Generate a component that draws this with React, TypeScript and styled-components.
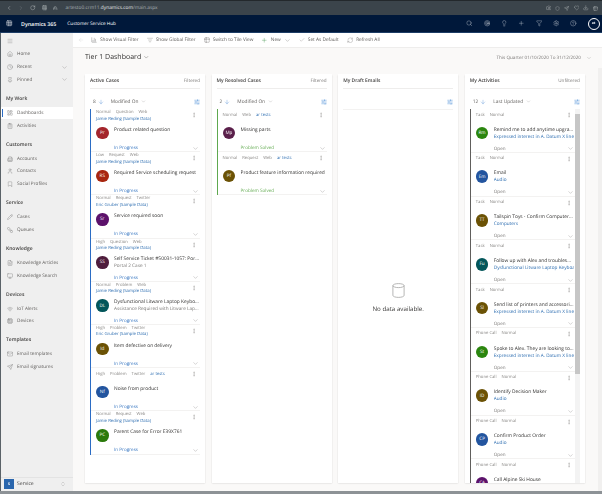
import React from "react";
import styled, { createGlobalStyle } from "styled-components";
import {
  ArrowDown, ArrowLeft, BarChart3, Bookmark, Building2, Camera, Check, ChevronDown, ChevronLeft, ChevronRight,
  ChevronsUpDown, ClipboardList, Clock, Cpu, Download, FileText, Filter, Grid3x3, Heart,
  HelpCircle, Home, Lightbulb, ListFilter, Lock, Mail, Menu, Monitor, MoreVertical, Pencil, Pin, Plus, RefreshCw,
  RotateCw, Search, Send, Settings, Shield, SlidersHorizontal, SquareStack, Table2, Target, User, Wifi, LayoutDashboard,
} from "lucide-react";

const GlobalStyle = createGlobalStyle`
  html, body { margin: 0; padding: 0; height: 494px; overflow: hidden; }
  body {
    font-family: "Open Sans", "Noto Sans", sans-serif;
    background: #faf9f8;
    color: #3b3a39;
    text-rendering: geometricPrecision;
  }
  * { box-sizing: border-box; }
`;

const Page = styled.div`
  width: 602px;
  height: 494px;
  display: flex;
  flex-direction: column;
  overflow: hidden;
  filter: blur(0.3px);
`;

const BrowserBar = styled.div`
  height: 15px;
  flex: none;
  background: #3b444b;
  border-top: 1px solid #23282c;
  display: flex;
  align-items: center;
  padding: 0 4px 0 6px;
  color: #d5d8da;
  gap: 6px;
`;

const BrowserRight = styled.div`
  display: flex;
  align-items: center;
  gap: 4.2px;
`;

const Url = styled.span`
  font-size: 4.8px;
  color: #a9b0b5;
  margin-left: 2px;
  b { color: #e6e8ea; font-weight: 400; }
`;

const Spacer = styled.div`
  flex: 1;
`;

const TopNav = styled.div`
  height: 17px;
  flex: none;
  background: #00183a;
  color: #fff;
  display: flex;
  align-items: center;
  padding: 0 2.5px 0 6px;
`;

const Brand = styled.span`
  font-size: 5.3px;
  font-weight: 600;
  margin-left: 8.5px;
  margin-right: 11px;
`;

const Hub = styled.span`
  font-size: 4.7px;
`;

const NavIcons = styled.div`
  display: flex;
  align-items: center;
  gap: 10.8px;
  color: #e8ebef;
`;

const UserBadge = styled.div`
  width: 12px;
  height: 12px;
  border: 0.6px solid #fff;
  border-radius: 50%;
  font-size: 3.6px;
  font-weight: 700;
  display: flex;
  align-items: center;
  justify-content: center;
`;

const Body = styled.div`
  flex: 1;
  min-height: 0;
  display: flex;
  border-top: 1px solid #1d3d66;
`;

const Sidebar = styled.aside`
  width: 73px;
  flex: none;
  background: #efefef;
  border-left: 1px solid #5a6268;
  display: flex;
  flex-direction: column;
`;

const SideScroll = styled.div`
  flex: 1;
`;

const NavRow = styled.div<{ $active?: boolean }>`
  height: 12.75px;
  display: flex;
  align-items: center;
  padding-left: 5.5px;
  gap: 4.5px;
  position: relative;
  font-size: 4.7px;
  color: #605e5c;
  background: ${(p) => (p.$active ? "#fff" : "transparent")};
  svg:first-child { color: #6b6a69; flex: none; }
  &::before {
    content: "";
    display: ${(p) => (p.$active ? "block" : "none")};
    position: absolute;
    left: 1px;
    top: 2.5px;
    bottom: 2.5px;
    width: 1.2px;
    background: #2b6cc4;
  }
`;

const HamburgerRow = styled(NavRow)`
  height: 15px;
`;

const RowChevron = styled.span`
  margin-left: auto;
  margin-right: 5px;
  display: flex;
  color: #777;
`;

const SectionTitle = styled.div`
  font-size: 5px;
  font-weight: 600;
  color: #403f3e;
  padding: 5px 0 0 5px;
  height: 20.25px;
  display: flex;
  align-items: center;
`;

const AreaSwitch = styled.div`
  height: 14.5px;
  flex: none;
  border-top: 1px solid #e3e3e3;
  display: flex;
  align-items: center;
  padding: 0 2px 0 2.7px;
  font-size: 5px;
  color: #403f3e;
  gap: 3px;
`;

const AreaSquare = styled.div`
  width: 10.4px;
  height: 10.4px;
  background: #2a66ad;
  color: #fff;
  font-size: 3.6px;
  font-weight: 700;
  display: flex;
  align-items: center;
  justify-content: center;
`;

const Main = styled.main`
  flex: 1;
  min-width: 0;
  display: flex;
  flex-direction: column;
  position: relative;
`;

const CommandBar = styled.div`
  height: 15px;
  flex: none;
  background: #fff;
  border-bottom: 1px solid #eeedec;
  display: flex;
  align-items: center;
  padding-left: 5px;
  font-size: 4.75px;
  color: #605e5c;
`;

const Cmd = styled.div<{ $gap?: number; $lead?: number }>`
  display: flex;
  align-items: center;
  gap: 3px;
  margin-left: ${(p) => p.$lead ?? 0}px;
  margin-right: ${(p) => p.$gap ?? 8}px;
`;

const TitleRow = styled.div`
  height: 26px;
  flex: none;
  display: flex;
  align-items: center;
  justify-content: space-between;
  padding: 0 10px 7px 12px;
`;

const Title = styled.h1`
  margin: 0;
  font-size: 7px;
  font-weight: 400;
  color: #323130;
  display: flex;
  align-items: center;
  gap: 2px;
`;

const DateRange = styled.div`
  font-size: 4.6px;
  color: #7a7876;
  display: flex;
  align-items: center;
  gap: 5px;
`;

const Columns = styled.div`
  display: flex;
  gap: 6.6px;
  padding-left: 12px;
  height: 409px;
  flex: none;
`;

const Card = styled.section`
  width: 120px;
  height: 409px;
  flex: none;
  background: #fff;
  box-shadow: 0 0.5px 1.5px rgba(0, 0, 0, 0.16);
  display: flex;
  flex-direction: column;
  overflow: hidden;
`;

const CardHead = styled.div`
  height: 15px;
  margin: 0 5px;
  flex: none;
  border-bottom: 1px solid #eeedec;
  display: flex;
  align-items: center;
  justify-content: space-between;
  font-size: 4.6px;
  color: #7a7876;
  b { font-size: 4.9px; font-weight: 600; color: #403f3e; }
`;

const SortRow = styled.div`
  height: 20px;
  flex: none;
  display: flex;
  align-items: center;
  padding: 5px 5px 0 8px;
  font-size: 4.8px;
  color: #605e5c;
  gap: 2px;
`;

const SortField = styled.span`
  margin-left: 5px;
  display: flex;
  align-items: center;
  gap: 3px;
`;

const ListIcon = styled.span`
  margin-left: auto;
  display: flex;
  color: #2b78d0;
`;

const List = styled.div<{ $scroll?: boolean }>`
  flex: 1;
  min-height: 0;
  overflow: hidden;
  margin: 0 5px;
  padding-right: ${(p) => (p.$scroll ? 5 : 0)}px;
  position: relative;
`;

const Item = styled.article<{ $bar: string; $h: number }>`
  height: ${(p) => p.$h}px;
  padding: 0 0 0 5px;
  border-left: 1px solid ${(p) => p.$bar};
  position: relative;
  display: flex;
  flex-direction: column;
  &::after {
    content: "";
    position: absolute;
    left: 0;
    right: 0;
    bottom: 0;
    height: 1px;
    background: #f3f2f1;
  }
`;

const Meta = styled.div<{ $solo?: boolean }>`
  display: flex;
  gap: 5px;
  font-size: 4.2px;
  color: #8a8886;
  height: 6px;
  margin-top: ${(p) => (p.$solo ? 3 : 0.5)}px;
  align-items: center;
  a { color: #2b6cb0; }
`;

const Owner = styled.div`
  font-size: 4.3px;
  color: #2b6cb0;
  height: 6px;
  line-height: 6px;
  white-space: nowrap;
`;

const Dots = styled.span`
  position: absolute;
  right: 3px;
  top: 3px;
  display: flex;
  color: #8a8886;
`;

const ItemMain = styled.div`
  position: absolute;
  left: 5px;
  top: 17.6px;
  right: 1px;
  display: flex;
  gap: 5.4px;
`;

const Avatar = styled.div<{ $color: string }>`
  width: 12.6px;
  height: 12.6px;
  flex: none;
  border-radius: 50%;
  background: ${(p) => p.$color};
  color: #fff;
  font-size: 4.6px;
  display: flex;
  align-items: center;
  justify-content: center;
`;

const ItemText = styled.div`
  flex: 1;
  min-width: 0;
  font-size: 4.7px;
  line-height: 7px;
  color: #484644;
`;

const ItemTitle = styled.div`
  white-space: nowrap;
  overflow: hidden;
  text-overflow: ellipsis;
  font-size: 4.85px;
  color: #323130;
`;

const SubDark = styled.div`
  white-space: nowrap;
  overflow: hidden;
  text-overflow: ellipsis;
  color: #7a7876;
`;

const SubLink = styled.div`
  white-space: nowrap;
  overflow: hidden;
  color: #2b6cb0;
`;

const Status = styled.div<{ $color: string }>`
  position: absolute;
  left: 23px;
  bottom: 0.7px;
  right: 1px;
  height: 7px;
  display: flex;
  align-items: center;
  justify-content: space-between;
  font-size: 4.6px;
  color: ${(p) => p.$color};
  svg { color: #6f6e6d; }
`;

const Empty = styled.div`
  flex: 1;
  margin: 0 5px;
  border-top: 1px solid #f3f2f1;
  display: flex;
  flex-direction: column;
  align-items: center;
  padding-top: 173px;
  gap: 6px;
  font-size: 6.2px;
  color: #3b3a39;
  svg { color: #a5a4a3; }
`;

const ScrollTrack = styled.div`
  position: absolute;
  right: 0;
  top: 0;
  bottom: 0;
  width: 5px;
  background: #f3f3f3;
`;

const ScrollThumb = styled.div`
  position: absolute;
  right: 0;
  top: 5px;
  height: 260px;
  width: 5px;
  background: #c6c6c6;
`;

const PageScroll = styled.div`
  position: absolute;
  right: 0;
  top: 35px;
  bottom: 0;
  width: 4px;
  background: #f1f0ef;
`;

const BottomStrip = styled.div`
  height: 3px;
  flex: none;
  background: #8d9296;
`;

type NavItem = { label: string; icon: typeof Home; active?: boolean; chevron?: boolean };
type NavGroup = { title?: string; items: NavItem[] };

const nav: NavGroup[] = [
  { items: [{ label: "Home", icon: Home }, { label: "Recent", icon: Clock, chevron: true }, { label: "Pinned", icon: Pin, chevron: true }] },
  { title: "My Work", items: [{ label: "Dashboards", icon: LayoutDashboard, active: true }, { label: "Activities", icon: ClipboardList }] },
  { title: "Customers", items: [{ label: "Accounts", icon: Building2 }, { label: "Contacts", icon: User }, { label: "Social Profiles", icon: Bookmark }] },
  { title: "Service", items: [{ label: "Cases", icon: Pencil }, { label: "Queues", icon: SquareStack }] },
  { title: "Knowledge", items: [{ label: "Knowledge Articles", icon: FileText }, { label: "Knowledge Search", icon: Monitor }] },
  { title: "Devices", items: [{ label: "IoT Alerts", icon: Wifi }, { label: "Devices", icon: Cpu }] },
  { title: "Templates", items: [{ label: "Email templates", icon: Mail }, { label: "Email signatures", icon: Send }] },
];

type Entry = { meta: string[]; owner?: string; link?: string; initials: string; color: string; title: string; sub?: string };

const JR = "Jamie Reding (Sample Data)";
const EG = "Eric Gruber (Sample Data)";

const active: Entry[] = [
  { meta: ["Normal", "Question", "Web"], owner: JR, initials: "Pr", color: "#a4262c", title: "Product related question" },
  { meta: ["Low", "Request", "Web"], owner: JR, initials: "RS", color: "#a8260f", title: "Required Service scheduling request" },
  { meta: ["Normal", "Request", "Twitter"], owner: EG, initials: "Sr", color: "#5c126b", title: "Service required soon" },
  { meta: ["High", "Question", "Web"], owner: JR, initials: "SS", color: "#4f1d3d", title: "Self Service Ticket #50031-1057: Portal 2 Case 1", sub: "Portal 2 Case 1" },
  { meta: ["Normal", "Problem", "Web"], owner: JR, initials: "DL", color: "#03565a", title: "Dysfunctional Litware Laptop Keyboard", sub: "Assistance Required with Litware Laptop" },
  { meta: ["High", "Problem", "Twitter"], owner: EG, initials: "Id", color: "#6b5205", title: "Item defective on delivery" },
  { meta: ["High", "Problem", "Twitter"], link: "ar tests", initials: "Nf", color: "#23559f", title: "Noise from product" },
  { meta: ["Normal", "Request", "Web"], owner: JR, initials: "PC", color: "#2b7a0b", title: "Parent Case for Error E39X761" },
];

const resolved: Entry[] = [
  { meta: ["Normal", "Web"], link: "ar tests", initials: "Mp", color: "#5a1f4a", title: "Missing parts" },
  { meta: ["Normal", "Request", "Web"], link: "ar tests", initials: "Pf", color: "#6b5205", title: "Product feature information required" },
];

const LX = "Expressed interest in A. Datum X line";

const activities: Entry[] = [
  { meta: ["Task", "Normal"], initials: "Rm", color: "#2b860f", title: "Remind me to add anytime upgrade to the order", sub: LX },
  { meta: ["Task", "Normal"], initials: "Em", color: "#23559f", title: "Email", sub: "Audio" },
  { meta: ["Task", "Normal"], initials: "TT", color: "#6b5205", title: "Tailspin Toys - Confirm Computer order details", sub: "Computers" },
  { meta: ["Task", "Normal"], initials: "Fu", color: "#03565a", title: "Follow up with Alex and troubleshoot the issue", sub: "Dysfunctional Litware Laptop Keyboard" },
  { meta: ["Task", "Normal"], initials: "Sl", color: "#6b5205", title: "Send list of printers and accessories to customer", sub: LX },
  { meta: ["Phone Call", "Normal"], initials: "St", color: "#2b860f", title: "Spoke to Alex. They are looking to expand the order", sub: LX },
  { meta: ["Phone Call", "Normal"], initials: "ID", color: "#6b5205", title: "Identify Decision Maker", sub: "Audio" },
  { meta: ["Phone Call", "Normal"], initials: "CP", color: "#23559f", title: "Confirm Product Order", sub: "Audio" },
  { meta: ["Phone Call", "Normal"], initials: "CA", color: "#5c126b", title: "Call Alpine Ski House", sub: "Audio" },
];

function Row({ e, bar, status, statusColor, h, linkSub }: { e: Entry; bar: string; status: string; statusColor: string; h: number; linkSub?: boolean }) {
  return (
    <Item $bar={bar} $h={h}>
      <Meta $solo={!e.owner}>
        {e.meta.map((m) => <span key={m}>{m}</span>)}
        {e.link && <a>{e.link}</a>}
      </Meta>
      {e.owner && <Owner>{e.owner}</Owner>}
      <Dots><MoreVertical size={6} strokeWidth={1.6} /></Dots>
      <ItemMain>
        <Avatar $color={e.color}>{e.initials}</Avatar>
        <ItemText>
          <ItemTitle>{e.title}</ItemTitle>
          {e.sub && (linkSub ? <SubLink>{e.sub}</SubLink> : <SubDark>{e.sub}</SubDark>)}
        </ItemText>
      </ItemMain>
      <Status $color={statusColor}>
        <span>{status}</span>
        <ChevronDown size={7} strokeWidth={1} />
      </Status>
    </Item>
  );
}

function CardTop({ title, filter, count, field }: { title: string; filter?: string; count?: number; field?: string }) {
  return (
    <>
      <CardHead><b>{title}</b><span>{filter}</span></CardHead>
      <SortRow>
        {count !== undefined && <span>{count}</span>}
        {count !== undefined && <ArrowDown size={6} strokeWidth={1.2} color="#2b78d0" />}
        {field && <SortField>{field}<ChevronDown size={5} strokeWidth={1} /></SortField>}
        <ListIcon><SlidersHorizontal size={6} strokeWidth={1.6} /></ListIcon>
      </SortRow>
    </>
  );
}

export default function App() {
  return (
    <Page>
      <GlobalStyle />
      <BrowserBar>
        <ChevronLeft size={6} strokeWidth={1.5} />
        <ChevronRight size={6} strokeWidth={1.5} color="#7b8389" />
        <RotateCw size={5.5} strokeWidth={1.5} />
        <Grid3x3 size={5.5} strokeWidth={1.3} />
        <Lock size={4.5} strokeWidth={1.6} />
        <Url>artesto0.crm11.<b>dynamics.com</b>/main.aspx</Url>
        <Spacer />
        <BrowserRight>
          <Camera size={5.5} strokeWidth={1.3} />
          <Shield size={5} strokeWidth={1.3} />
          <Send size={5} strokeWidth={1.3} />
          <Heart size={5.5} strokeWidth={1.3} />
          <Download size={5.5} strokeWidth={1.3} />
          <Table2 size={5} strokeWidth={1.3} />
        </BrowserRight>
      </BrowserBar>
      <TopNav>
        <Grid3x3 size={6.5} strokeWidth={1.5} />
        <Brand>Dynamics 365</Brand>
        <Hub>Customer Service Hub</Hub>
        <Spacer />
        <NavIcons>
          <Search size={6.5} strokeWidth={1.2} />
          <Target size={6.5} strokeWidth={1.2} />
          <Lightbulb size={6.5} strokeWidth={1.2} />
          <Plus size={6.5} strokeWidth={1.2} />
          <Filter size={6.5} strokeWidth={1.2} />
          <Settings size={6.5} strokeWidth={1.2} />
          <HelpCircle size={6.5} strokeWidth={1.2} />
          <UserBadge>at</UserBadge>
        </NavIcons>
      </TopNav>
      <Body>
        <Sidebar>
          <SideScroll>
            <HamburgerRow><Menu size={6} strokeWidth={1.2} /></HamburgerRow>
            {nav.map((g, i) => (
              <React.Fragment key={i}>
                {g.title && <SectionTitle>{g.title}</SectionTitle>}
                {g.items.map((it) => (
                  <NavRow key={it.label} $active={it.active}>
                    <it.icon size={6} strokeWidth={1.3} />
                    {it.label}
                    {it.chevron && <RowChevron><ChevronDown size={7} strokeWidth={1} /></RowChevron>}
                  </NavRow>
                ))}
              </React.Fragment>
            ))}
          </SideScroll>
          <AreaSwitch>
            <AreaSquare>S</AreaSquare>
            Service
            <RowChevron><ChevronsUpDown size={6} strokeWidth={1} /></RowChevron>
          </AreaSwitch>
        </Sidebar>
        <Main>
          <CommandBar>
            <ArrowLeft size={6} strokeWidth={1} color="#c8c6c4" />
            <Cmd $lead={7} $gap={8}><BarChart3 size={6} strokeWidth={1.4} />Show Visual Filter</Cmd>
            <Cmd $gap={8}><ListFilter size={6} strokeWidth={1.2} />Show Global Filter</Cmd>
            <Cmd $gap={8}><Table2 size={6} strokeWidth={1.3} />Switch to Tile View</Cmd>
            <Cmd $gap={8}><Plus size={6.5} strokeWidth={1.3} color="#2f8a3b" />New<ChevronDown size={7} strokeWidth={1} /></Cmd>
            <Cmd $gap={8}><Check size={6} strokeWidth={1} />Set As Default</Cmd>
            <Cmd><RefreshCw size={6.5} strokeWidth={1} />Refresh All</Cmd>
          </CommandBar>
          <TitleRow>
            <Title>Tier 1 Dashboard <ChevronDown size={6.5} strokeWidth={1.2} /></Title>
            <DateRange>This Quarter 01/10/2020 To 31/12/2020 <ChevronDown size={6} strokeWidth={1} /></DateRange>
          </TitleRow>
          <Columns>
            <Card>
              <CardTop title="Active Cases" filter="Filtered" count={8} field="Modified On" />
              <List>
                {active.map((e) => <Row key={e.initials} e={e} bar="#2b6cc4" status="In Progress" statusColor="#3a78c2" h={43.2} />)}
              </List>
            </Card>
            <Card>
              <CardTop title="My Resolved Cases" filter="Filtered" count={2} field="Modified On" />
              <List>
                {resolved.map((e) => <Row key={e.initials} e={e} bar="#5fa84f" status="Problem Solved" statusColor="#66ad55" h={43.2} />)}
              </List>
            </Card>
            <Card>
              <CardTop title="My Draft Emails" />
              <Empty>
                <svg width="13" height="15" viewBox="0 0 13 15" fill="none" stroke="currentColor" strokeWidth="0.8">
                  <ellipse cx="6.5" cy="2.6" rx="5.6" ry="2" />
                  <path d="M0.9 2.6v9.8c0 1.1 2.5 2 5.6 2s5.6-.9 5.6-2V2.6" />
                </svg>
                No data available.
              </Empty>
            </Card>
            <Card>
              <CardTop title="My Activities" filter="Unfiltered" count={12} field="Last Updated" />
              <List $scroll>
                {activities.map((e) => <Row key={e.initials} e={e} bar="#605e5c" status="Open" statusColor="#7a7876" h={43.8} linkSub />)}
                <ScrollTrack><ScrollThumb /></ScrollTrack>
              </List>
            </Card>
          </Columns>
          <PageScroll />
        </Main>
      </Body>
      <BottomStrip />
    </Page>
  );
}
